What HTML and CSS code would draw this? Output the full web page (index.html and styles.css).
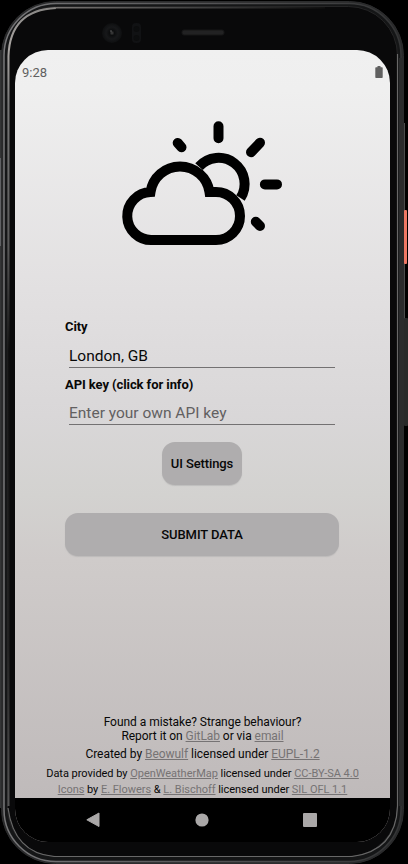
FILE: index.html
```html
<!DOCTYPE html>
<html lang="en">
<head>
<meta charset="utf-8">
<title>Weather setup</title>
<link rel="stylesheet" href="styles.css">
</head>
<body>
<div class="device">
  <svg class="shell" viewBox="0 0 408 864" aria-hidden="true">
    <defs>
      <linearGradient id="rim" x1="0" y1="0" x2="1" y2="0"><stop offset="0" stop-color="#777779"/><stop offset=".5" stop-color="#555557"/><stop offset="1" stop-color="#333435"/></linearGradient>
      <linearGradient id="left" x1="0" y1="0" x2="0" y2="1"><stop offset="0" stop-color="#8a8886"/><stop offset=".05" stop-color="#aaa6a3"/><stop offset=".12" stop-color="#777"/><stop offset=".3" stop-color="#585858"/><stop offset=".43" stop-color="#111"/><stop offset=".8" stop-color="#222"/><stop offset="1" stop-color="#555"/></linearGradient>
      <linearGradient id="top" x1="0" y1="0" x2="1" y2="0"><stop offset="0" stop-color="#777472"/><stop offset=".5" stop-color="#444"/><stop offset="1" stop-color="#111"/></linearGradient>
      <radialGradient id="lens"><stop offset="0" stop-color="#444"/><stop offset=".25" stop-color="#0c0d0e"/><stop offset=".6" stop-color="#17181a"/><stop offset="1" stop-color="#0e0f10"/></radialGradient>
    </defs>
    <path d="M0 50V808" stroke="#343536" stroke-width="4"/>
    <path d="M.5 158V246" stroke="#606164"/>
    <path d="M404.500 123V320" stroke="#4a4b4b"/>
    <rect x="1.500" y="1.500" width="402" height="862" rx="54" fill="#29292a" stroke="#2b2c2d"/>
    <rect x="4" y="3.500" width="397" height="858" rx="52" fill="#151617" stroke="url(#rim)" stroke-width="1.500"/>
    <rect x="399" y="58" width="5" height="748" fill="#2a2b2c"/>
    <rect x="404" y="210" width="3" height="54" rx="1" fill="#ef7764"/>
    <rect x="404" y="318" width="4" height="108" rx="1" fill="#282929"/>
    <rect x="7.500" y="6.500" width="390" height="850" rx="49" fill="#09090a" stroke="#252526"/>
    <path d="M8.500 806V56Q10 10 56 8" fill="none" stroke="url(#left)" stroke-width="2"/>
    <rect x="55" y="7" width="270" height="1.500" fill="url(#top)"/>
    <path d="M397.500 54V806Q396 851 352 856.500H54Q14 853 8 808" fill="none" stroke="#686868" stroke-width="1.200"/>
    <circle cx="112" cy="33" r="10" fill="url(#lens)"/><circle cx="111" cy="31" r=".7" fill="#777"/>
    <rect x="132" y="23" width="9" height="20" rx="4" fill="#111214"/><circle cx="136.500" cy="29" r="3" fill="#0c0d0e"/><circle cx="136.500" cy="38" r="3" fill="#0c0d0e"/>
    <rect x="182" y="30" width="42" height="5" rx="2" fill="#222223" stroke="#161617"/>
  </svg>
  <main class="screen">
    <header class="status"><span>9:28</span>
      <svg width="8" height="12" viewBox="0 0 8 12"><path d="M2.500 0H5.500V1.200H7Q7.700 1.200 7.700 2V11.200Q7.700 12 7 12H1Q.3 12 .3 11.200V2Q.3 1.200 1 1.200H2.500Z" fill="#606060"/></svg>
    </header>
    <svg class="weather" width="170" height="130" viewBox="117 118 170 130" fill="none" stroke="#000" stroke-width="10">
      <path d="M152 240H216A24 24 0 0 0 216 192H209.500A29.800 29.800 0 0 0 150.500 192A24 24 0 0 0 152 240Z"/>
      <path d="M199 166.600A26.100 26.100 0 0 1 240.500 198"/>
      <path stroke-linecap="round" d="M218.500 126.200V138.300M260 142.700L251 152.200M264.900 184.400H277M255.800 221.800L260 226M177.700 142.900L181.500 147.200"/>
    </svg>
    <section class="form">
      <div class="label city">City</div>
      <div class="field">London, GB</div>
      <div class="label">API key (click for info)</div>
      <div class="field hint">Enter your own API key</div>
      <button class="settings">UI Settings</button>
      <button class="submit">SUBMIT DATA</button>
    </section>
    <footer class="credits">
      <p class="found">Found a mistake? Strange behaviour?</p>
      <p class="report">Report it on <a>GitLab</a> or via <a>email</a></p>
      <p class="created">Created by <a>Beowulf</a> licensed under <a>EUPL-1.2</a></p>
      <p class="data">Data provided by <a>OpenWeatherMap</a> licensed under <a>CC-BY-SA 4.0</a></p>
      <p class="icons"><a>Icons</a> by <a>E. Flowers</a> &amp; <a>L. Bischoff</a> licensed under <a>SIL OFL 1.1</a></p>
    </footer>
    <nav class="nav">
      <svg width="14" height="16" viewBox="0 0 14 16"><path d="M13 1V14.500L.8 7.800Z" fill="#aaa8a8" stroke="#aaa8a8" stroke-linejoin="round"/></svg>
      <svg width="14" height="16" viewBox="0 0 14 16"><circle cx="7" cy="8" r="6.600" fill="#aaa8a8"/></svg>
      <svg width="14" height="16" viewBox="0 0 14 16"><rect y="1" width="14" height="14" rx="1" fill="#aaa8a8"/></svg>
    </nav>
  </main>
</div>
</body>
</html>
```
FILE: styles.css
```css
* { box-sizing: border-box; }
body { margin: 0; background: #000; font-family: Roboto, sans-serif; color: #080808; }
.device { position: relative; width: 408px; height: 864px; overflow: hidden; padding: 50px 18px 22px 15px; }
.shell { position: absolute; inset: 0; width: 408px; height: 864px; }
.screen { position: relative; display: flex; flex-direction: column; width: 375px; height: 792px; overflow: hidden; border-radius: 33px; background: linear-gradient(#f0f0f0 0, #efefef 40px, #e2e0e1 240px, #d9d7d8 365px, #d3d2d0 445px, #cfcbca 510px, #bfbaba 748px); }
.status { display: flex; justify-content: space-between; height: 68px; padding: 15px 7px 0; font-size: 13px; line-height: 16px; color: #606060; }
.status svg { margin-top: 1px; }
.weather { display: block; flex: none; margin-left: 102px; }
.form { display: flex; flex-direction: column; margin: 71px 50px 0; width: 274px; }
.label { height: 15px; font-size: 13px; line-height: 15px; font-weight: 700; white-space: nowrap; letter-spacing: -.08px; }
.city { height: 16px; }
.field { height: 33px; margin: 0 4px 9px; padding-top: 12px; border-bottom: 1px solid #737172; font-size: 15.500px; line-height: 19px; white-space: nowrap; }
.hint { color: #626061; }
button { padding: 0; border: 0; border-radius: 13px; background: #afadae; color: #080808; font: 500 13px/16px Roboto, sans-serif; letter-spacing: -.1px; height: 43px; box-shadow: 0 1px 1px #aaa8; }
.settings { align-self: center; width: 80px; margin-top: 8px; }
.submit { width: 274px; margin-top: 28px; }
.credits { margin-top: auto; height: 83px; text-align: center; white-space: nowrap; font-size: 12px; line-height: 14px; letter-spacing: -.04px; }
.credits p { margin: 0; }
.credits .report { letter-spacing: -.06px; }
.credits .created { margin-top: 4px; }
.credits .data { margin-top: 6px; font-size: 11px; letter-spacing: -.03px; }
.credits .icons { margin-top: 2px; font-size: 11px; letter-spacing: -.03px; }
.credits a { color: #767374; text-decoration: underline; }
.nav { display: flex; flex: none; align-items: center; justify-content: space-between; height: 44px; padding: 0 73px 0 71px; background: #000; }
```
